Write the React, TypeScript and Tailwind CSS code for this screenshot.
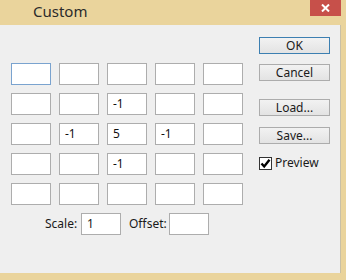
import React from "react";

const cells: string[][] = [
  ["", "", "", "", ""],
  ["", "", "-1", "", ""],
  ["", "-1", "5", "-1", ""],
  ["", "", "-1", "", ""],
  ["", "", "", "", ""],
];

function Cell({ v, focus }: { v: string; focus?: boolean }) {
  return (
    <div
      className={`w-[40px] h-[22px] bg-white border flex items-center pl-[5px] text-[12px] text-[#111] ${
        focus ? "border-[#7aa3cf]" : "border-[#adadad]"
      }`}
    >
      {v}
    </div>
  );
}

function Btn({ label, primary }: { label: string; primary?: boolean }) {
  return (
    <div
      className={`w-[71px] h-[17px] flex items-center justify-center text-[12px] text-[#1a1a1a] bg-gradient-to-b from-[#f2f2f2] to-[#e3e3e3] border ${
        primary ? "border-[#3c7fb1]" : "border-[#acacac]"
      }`}
    >
      {label}
    </div>
  );
}

export default function App() {
  return (
    <div
      className="w-[346px] h-[280px] bg-[#ead49c] flex flex-col overflow-hidden"
      style={{ fontFamily: '"Noto Sans", "Open Sans", sans-serif' }}
    >
      <div className="h-[25px] flex items-start justify-between shrink-0">
        <div className="pl-[33px] pt-[1px] text-[15px] text-[#2b2b2b] leading-[20px]">Custom</div>
        <div className="w-[31px] h-[16px] mr-[5px] bg-[#c7504a] flex items-center justify-center">
          <svg width="9" height="8" viewBox="0 0 9 8">
            <path d="M1 0.5 L8 7.5 M8 0.5 L1 7.5" stroke="#fff" strokeWidth="2" fill="none" />
          </svg>
        </div>
      </div>
      <div className="w-[341px] h-[248px] bg-[#efefef] border-r border-[#c9c0a6] flex shrink-0">
        <div className="pl-[11px] pt-[38px] flex flex-col">
          <div className="grid grid-cols-[repeat(5,40px)] gap-x-[8px] gap-y-[8px]">
            {cells.map((row, r) =>
              row.map((v, c) => <Cell key={`${r}-${c}`} v={v} focus={r === 0 && c === 0} />)
            )}
          </div>
          <div className="flex items-center mt-[8px] text-[12px] text-[#1a1a1a]">
            <span className="ml-[34px] w-[36px]">Scale:</span>
            <div className="w-[40px] h-[22px] bg-white border border-[#adadad] flex items-center pl-[5px]">1</div>
            <span className="ml-[8px] w-[40px]">Offset:</span>
            <div className="w-[40px] h-[22px] bg-white border border-[#adadad]"></div>
          </div>
        </div>
        <div className="ml-[16px] pt-[12px] flex flex-col">
          <Btn label="OK" primary />
          <div className="mt-[10px]">
            <Btn label="Cancel" />
          </div>
          <div className="mt-[18px]">
            <Btn label="Load..." />
          </div>
          <div className="mt-[11px]">
            <Btn label="Save..." />
          </div>
          <div className="mt-[10px] flex items-center text-[12px] text-[#1a1a1a]">
            <div className="w-[13px] h-[13px] bg-white border border-[#333] flex items-center justify-center">
              <svg width="11" height="11" viewBox="0 0 11 11">
                <path d="M1.5 5.5 L4.2 8.5 L9.5 1.8" stroke="#000" strokeWidth="2.4" fill="none" />
              </svg>
            </div>
            <span className="ml-[3px]">Preview</span>
          </div>
        </div>
      </div>
    </div>
  );
}
